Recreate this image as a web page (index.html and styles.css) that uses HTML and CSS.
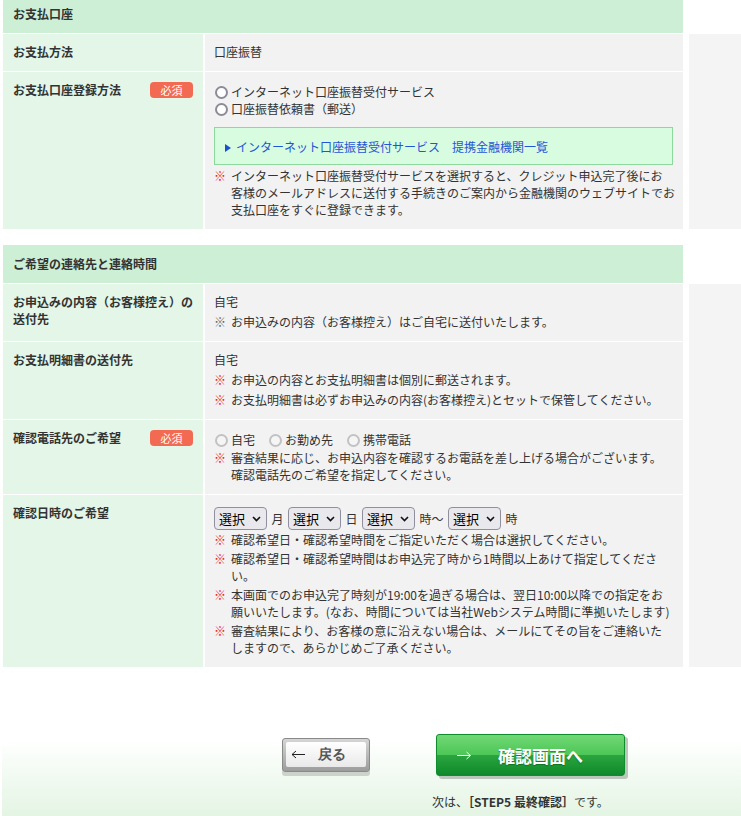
FILE: index.html
```html
<!DOCTYPE html>
<html lang="ja">
<head>
<meta charset="UTF-8">
<meta name="viewport" content="width=device-width, initial-scale=1.0">
<title>お申込み内容の入力</title>
<link rel="stylesheet" href="styles.css">
</head>
<body>

<div class="page">

  <section class="sec">
    <h2 class="sec-head">お支払口座</h2>
    <div class="sec-body">
      <div class="form-table">
        <div class="row">
          <div class="label">お支払方法</div>
          <div class="value">口座振替</div>
        </div>
        <div class="row">
          <div class="label">お支払口座登録方法<span class="badge">必須</span></div>
          <div class="value">
            <div class="radios">
              <label><input type="radio" name="account" class="radio">インターネット口座振替受付サービス</label>
              <label><input type="radio" name="account" class="radio">口座振替依頼書（郵送）</label>
            </div>
            <div class="info-box">
              <a href="#" class="info-link"><svg class="tri" width="6" height="8" viewBox="0 0 6 8"><path d="M0 0 L6 4 L0 8 Z" fill="#1f4fd1"/></svg>インターネット口座振替受付サービス　提携金融機関一覧</a>
            </div>
            <ul class="notes">
              <li><span class="mark">※</span><span>インターネット口座振替受付サービスを選択すると、クレジット申込完了後にお<br>客様のメールアドレスに送付する手続きのご案内から金融機関のウェブサイトでお<br>支払口座をすぐに登録できます。</span></li>
            </ul>
          </div>
        </div>
      </div>
      <div class="side"></div>
    </div>
  </section>

  <section class="sec sec-next">
    <h2 class="sec-head">ご希望の連絡先と連絡時間</h2>
    <div class="sec-body">
      <div class="form-table">
        <div class="row">
          <div class="label">お申込みの内容（お客様控え）の送付先</div>
          <div class="value">
            <div>自宅</div>
            <ul class="notes">
              <li><span class="mark mark-gray">※</span><span>お申込みの内容（お客様控え）はご自宅に送付いたします。</span></li>
            </ul>
          </div>
        </div>
        <div class="row">
          <div class="label">お支払明細書の送付先</div>
          <div class="value">
            <div>自宅</div>
            <ul class="notes">
              <li><span class="mark">※</span><span>お申込の内容とお支払明細書は個別に郵送されます。</span></li>
              <li><span class="mark">※</span><span>お支払明細書は必ずお申込みの内容(お客様控え)とセットで保管してください。</span></li>
            </ul>
          </div>
        </div>
        <div class="row">
          <div class="label">確認電話先のご希望<span class="badge">必須</span></div>
          <div class="value">
            <div class="radios-inline">
              <label><input type="radio" name="tel" class="radio radio-light">自宅</label>
              <label><input type="radio" name="tel" class="radio radio-light">お勤め先</label>
              <label><input type="radio" name="tel" class="radio radio-light">携帯電話</label>
            </div>
            <ul class="notes notes-tight">
              <li><span class="mark">※</span><span>審査結果に応じ、お申込内容を確認するお電話を差し上げる場合がございます。<br>確認電話先のご希望を指定してください。</span></li>
            </ul>
          </div>
        </div>
        <div class="row">
          <div class="label">確認日時のご希望</div>
          <div class="value">
            <div class="time-row">
              <span class="select-wrap">
                <select><option>選択</option></select>
                <svg class="chev" width="9" height="6" viewBox="0 0 9 6"><path d="M1 1 L4.5 4.5 L8 1" fill="none" stroke="#111" stroke-width="1.6"/></svg>
              </span>
              <span>月</span>
              <span class="select-wrap">
                <select><option>選択</option></select>
                <svg class="chev" width="9" height="6" viewBox="0 0 9 6"><path d="M1 1 L4.5 4.5 L8 1" fill="none" stroke="#111" stroke-width="1.6"/></svg>
              </span>
              <span>日</span>
              <span class="select-wrap">
                <select><option>選択</option></select>
                <svg class="chev" width="9" height="6" viewBox="0 0 9 6"><path d="M1 1 L4.5 4.5 L8 1" fill="none" stroke="#111" stroke-width="1.6"/></svg>
              </span>
              <span>時〜</span>
              <span class="select-wrap">
                <select><option>選択</option></select>
                <svg class="chev" width="9" height="6" viewBox="0 0 9 6"><path d="M1 1 L4.5 4.5 L8 1" fill="none" stroke="#111" stroke-width="1.6"/></svg>
              </span>
              <span>時</span>
            </div>
            <ul class="notes notes-tight notes-time">
              <li><span class="mark">※</span><span>確認希望日・確認希望時間をご指定いただく場合は選択してください。</span></li>
              <li><span class="mark">※</span><span>確認希望日・確認希望時間はお申込完了時から1時間以上あけて指定してくださ<br>い。</span></li>
              <li><span class="mark">※</span><span>本画面でのお申込完了時刻が19:00を過ぎる場合は、翌日10:00以降での指定をお<br>願いいたします。(なお、時間については当社Webシステム時間に準拠いたします)</span></li>
              <li><span class="mark">※</span><span>審査結果により、お客様の意に沿えない場合は、メールにてその旨をご連絡いた<br>しますので、あらかじめご了承ください。</span></li>
            </ul>
          </div>
        </div>
      </div>
      <div class="side"></div>
    </div>
  </section>

  <div class="footer">
    <div class="footer-buttons">
      <button class="btn-back"><span class="btn-back-inner"><svg class="arrow" width="15" height="9" viewBox="0 0 15 9"><path d="M1 4.5 H14 M1 4.5 L5 1 M1 4.5 L5 8" fill="none" stroke="#222" stroke-width="1"/></svg>戻る</span></button>
      <button class="btn-next"><svg class="arrow" width="15" height="9" viewBox="0 0 15 9"><path d="M0 4.5 H13.5 M13.5 4.5 L9.5 1 M13.5 4.5 L9.5 8" fill="none" stroke="#fff" stroke-width="1"/></svg>確認画面へ</button>
    </div>
    <p class="next-step">次は、<b>［STEP5 最終確認］</b>です。</p>
  </div>

</div>

</body>
</html>
```

FILE: styles.css
```css
body {
  margin: 0;
  font-family: "Noto Sans CJK JP", "Liberation Sans", sans-serif;
  font-size: 12px;
  line-height: 17px;
  color: #333;
  background-color: #fff;
  overflow: hidden;
}
.page {
  margin-top: -5px;
  padding-left: 3px;
}
.sec-next {
  margin-top: 16px;
}
.sec-head {
  width: 680px;
  box-sizing: border-box;
  margin: 0 0 1px;
  padding: 10px 10px;
  font-size: 12px;
  line-height: 18px;
  font-weight: bold;
  background-color: #ccefd5;
}
.sec-body {
  display: flex;
}
.form-table {
  width: 680px;
  display: grid;
  row-gap: 1px;
  background-color: #fff;
}
.side {
  flex: 1;
  margin-left: 6px;
  background-color: #f4f4f4;
}
.row {
  display: grid;
  grid-template-columns: 200px minmax(0, 1fr);
  column-gap: 2px;
}
.label {
  display: flex;
  justify-content: space-between;
  align-items: flex-start;
  padding: 9px 8px 9px 10px;
  font-weight: bold;
  background-color: #e4f6e8;
}
.badge {
  flex: none;
  width: 43px;
  height: 16px;
  margin: 1px 2px 0 0;
  border-radius: 4px;
  background-color: #f26a52;
  color: #fff;
  font-size: 11px;
  font-weight: normal;
  line-height: 16px;
  text-align: center;
}
.value {
  padding: 9px 10px 11px 9px;
  background-color: #f2f2f2;
}
.radios {
  padding-top: 2px;
}
.radios label {
  display: block;
}
.radio {
  appearance: none;
  -webkit-appearance: none;
  width: 13px;
  height: 13px;
  margin: 0 3px 0 1px;
  box-sizing: border-box;
  border: 2px solid #8c8b97;
  border-radius: 50%;
  background-color: #fff;
  vertical-align: -2px;
}
.radio-light {
  border-color: #c2c2c4;
  background-color: #f5f5f5;
}
.radios-inline {
  display: flex;
  gap: 13px;
  padding-top: 2px;
}
.info-box {
  margin: 10px 0 -1px;
  padding: 10px 10px 9px;
  border: 1px solid #8dd89c;
  background-color: #d8fcdf;
}
.info-link {
  color: #2356d6;
  text-decoration: none;
}
.tri {
  margin-right: 5px;
  vertical-align: 0;
}
.notes {
  list-style: none;
  margin: 0;
  padding: 0;
  white-space: nowrap;
}
.notes li {
  display: flex;
  margin-top: 3px;
}
.notes-tight li:first-child {
  margin-top: 1px;
}
.notes-time li {
  margin-top: 2px;
}
.mark {
  flex: none;
  width: 17px;
  color: #f01e1e;
}
.mark-gray {
  color: #666;
}
.time-row {
  display: flex;
  align-items: center;
  gap: 4.5px;
  padding-top: 3px;
}
.select-wrap {
  position: relative;
  display: inline-block;
}
.select-wrap select {
  appearance: none;
  -webkit-appearance: none;
  width: 53px;
  height: 23px;
  padding: 0 0 0 4px;
  border: 1px solid #8f8f9d;
  border-radius: 4px;
  background-color: #e9e9ed;
  font-family: inherit;
  font-size: 13px;
  color: #000;
  display: block;
}
.chev {
  position: absolute;
  right: 6px;
  top: 9px;
  pointer-events: none;
}
.footer {
  margin: 23px 0 0 -1px;
  padding: 44px 0 30px 280px;
  background: linear-gradient(#fff 50px, #e2f4e2 130px);
}
.footer-buttons {
  display: flex;
  align-items: center;
  gap: 66px;
}
.btn-back {
  width: 88px;
  height: 34px;
  padding: 3px 3px 4px;
  border: 1px solid #8a8a8a;
  border-radius: 3px;
  background: linear-gradient(#d6d6d6, #9c9c9c);
  box-shadow: 0 4px 0 #cbd3cb;
  cursor: pointer;
}
.btn-back-inner {
  display: flex;
  align-items: center;
  height: 100%;
  padding-left: 5px;
  border-radius: 2px;
  background: linear-gradient(#fff, #e9e9e9);
  color: #555;
  font-family: inherit;
  font-size: 14px;
  font-weight: bold;
}
.btn-back .arrow {
  margin-right: 12px;
}
.btn-next {
  display: flex;
  align-items: center;
  width: 189px;
  height: 42px;
  padding: 0 0 0 20px;
  border: 1px solid #0f8c2c;
  border-radius: 3px;
  background: linear-gradient(#71d874, #4cc657 50%, #2aa53f 50%, #0f8a2b);
  box-shadow: 3px 3px 0 #bcc6bc;
  color: #fff;
  font-family: inherit;
  font-size: 17px;
  font-weight: bold;
  text-shadow: 0 1px 1px rgba(0, 80, 20, 0.5);
  cursor: pointer;
}
.btn-next .arrow {
  margin-right: 26px;
}
.next-step {
  margin: 17px 0 0 150px;
}
```
